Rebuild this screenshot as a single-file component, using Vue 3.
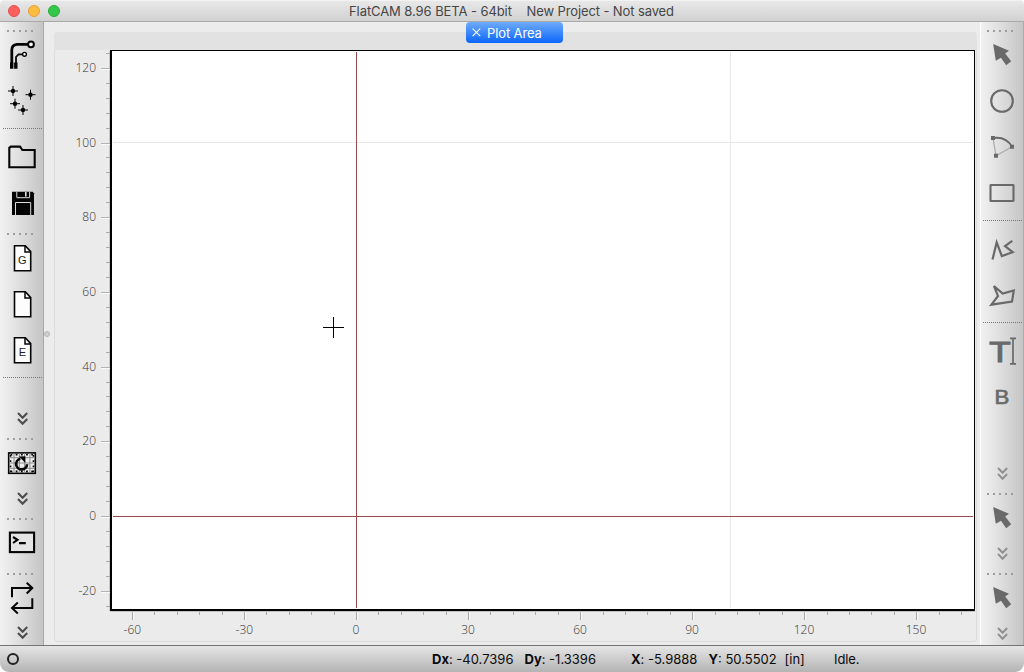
<script setup>
const leftTools = ['handle', 'track', 'pads', 'sep', 'folder', 'save', 'handle', 'gerber', 'file', 'excellon', 'sep', 'more', 'handle', 'replot', 'more', 'handle', 'shell', 'handle', 'swap', 'more']
const rightTools = ['handle', 'select', 'circle', 'arc', 'rect', 'sep', 'path', 'polygon', 'sep', 'text', 'buffer', 'more', 'handle', 'select', 'more', 'handle', 'select', 'more']
const bars = [{ side: 'left', tools: leftTools }, { side: 'right', tools: rightTools }]
const padSpots = [[6, 5], [23.5, 8.7], [8, 17.7], [16, 24]]

const x0 = 356, y0 = 516, unit = 3.735
const yMajor = [120, 100, 80, 60, 40, 20, 0, -20].map(v => ({ v, p: Math.round(y0 - v * unit) }))
const yMinor = []
for (let v = -24; v <= 124; v += 4) if (v % 20) yMinor.push(Math.round(y0 - v * unit))
const xMajor = [-60, -30, 0, 30, 60, 90, 120, 150].map(v => ({ v, p: Math.round(x0 + v * unit) }))
const xMinor = []
for (let v = -60; v <= 162; v += 6) if (v % 30) xMinor.push(Math.round(x0 + v * unit))
</script>

<template>
  <div class="window">
    <header class="titlebar">
      <div class="lights"><i class="red"></i><i class="amber"></i><i class="green"></i></div>
      <span class="app-name">FlatCAM 8.96 BETA - 64bit</span>
      <span class="project">New Project - Not saved</span>
    </header>

    <div class="body">
      <nav v-for="bar in bars" :key="bar.side" class="toolbar" :class="bar.side">
        <template v-for="(t, i) in bar.tools" :key="i">
          <div v-if="t === 'handle'" class="handle"><i v-for="n in 5" :key="n"></i></div>
          <div v-else-if="t === 'sep'" class="sep"></div>
          <svg v-else-if="t === 'more'" class="more" viewBox="0 0 14 14"><path d="M3 1 L7.6 5.8 L12.2 1 M3 7 L7.6 11.8 L12.2 7" /></svg>
          <svg v-else class="icon" viewBox="0 0 30 30">
            <g v-if="t === 'track'">
              <path d="M21 4.3 H10 Q4.8 4.8 4.8 10 V24" stroke-width="2.8" />
              <circle cx="24" cy="4.3" r="2.9" stroke-width="2" fill="#fff" />
              <path d="M15 14.3 H11.5 L9 17 V24" stroke-width="1.8" />
              <circle cx="17.5" cy="14.3" r="1.9" stroke-width="1.4" fill="#fff" />
              <path d="M4.7 22.5 V28.7 M8.8 22.5 V28.7" stroke-width="3.4" />
            </g>
            <g v-else-if="t === 'pads'">
              <g v-for="p in padSpots" :key="p[0]" :transform="`translate(${p[0]} ${p[1]})`">
                <path d="M-5 0 H5 M0 -5 V5" stroke-width="1" />
                <circle r="2.2" class="solid" />
              </g>
            </g>
            <path v-else-if="t === 'folder'" d="M2.3 25.2 V5.8 L3.8 4.6 H13 L15.4 8 H27.7 V25.2 Z" stroke-width="2.1" />
            <g v-else-if="t === 'save'">
              <path class="solid" d="M5 3.7 H25.6 L27 5.2 V27 H5 Z" />
              <path d="M9.8 3.7 V9.2 M22.6 3.7 V9.2 M9.6 9.7 H22.8" stroke="#ddd" stroke-width="1" />
              <rect x="18" y="4" width="1.6" height="4.6" fill="#ddd" stroke="none" />
              <path d="M8.5 27 V14.5 H23.7 V27" stroke="#ddd" stroke-width="1" />
            </g>
            <g v-else-if="['gerber', 'file', 'excellon'].includes(t)">
              <path d="M7.5 2.8 H18.3 L23.7 8.6 V27.7 H7.5 Z" fill="#fdfdfd" stroke-width="1.6" />
              <path d="M18 3 V8.9 H23.5" stroke-width="1.5" />
              <text v-if="t !== 'file'" x="15.4" y="21.4">{{ t === 'gerber' ? 'G' : 'E' }}</text>
            </g>
            <g v-else-if="t === 'replot'">
              <rect x="1.7" y="4.9" width="26.6" height="20.4" fill="#eee" stroke-width="1.6" />
              <path d="M2 9.7 H28 M2 15 H28 M2 20.3 H28 M7 5 V25 M12.3 5 V25 M17.6 5 V25 M22.9 5 V25" stroke="#8a8a8a" stroke-width="1" />
              <path d="M3.5 6.8 H27 M3.5 23.4 H27" stroke-dasharray="1.8 3.4" stroke-width="1.6" />
              <path d="M3.6 7 V24 M26.4 7 V24" stroke-dasharray="1.8 3.4" stroke-width="1.5" />
              <path d="M13.4 10.8 A5.4 5.4 0 1 0 20 16.2" stroke-width="2.7" />
              <path class="solid" d="M12 8.6 L18.4 8.2 V15 Z" />
            </g>
            <g v-else-if="t === 'shell'">
              <rect x="2.9" y="5.6" width="24.2" height="19.5" fill="#e4e4e4" stroke-width="2.1" />
              <path d="M6 10 L10.5 12.9 L6 16" stroke-width="2.1" />
              <path d="M12 16.2 H18.8" stroke-width="2.2" />
            </g>
            <path v-else-if="t === 'swap'" d="M5 14.3 V5 H25 M19.7 -.3 L25.3 5 L19.7 10.5 M25.3 15.3 V25 H5 M10.8 19.5 L5 25 L10.8 30.5" stroke-width="2" />
            <path v-else-if="t === 'select'" class="solid" d="M6.2 4 L22 10.7 L18.2 13.4 L24.2 21.3 L19.2 25.3 L14 17.7 L8.8 20.8 Z" />
            <circle v-else-if="t === 'circle'" cx="15" cy="15" r="10.8" stroke-width="2.1" />
            <g v-else-if="t === 'arc'">
              <path d="M6 6 L9 23.7 L25 14.7" stroke="#aaa" stroke-width="1.2" />
              <path d="M6 6 Q19 4 25 14.7" stroke-width="1.9" />
              <path class="solid" d="M4 4 h4 v4 h-4 z M23 12.7 h4 v4 h-4 z M7 21.7 h4 v4 h-4 z" />
            </g>
            <rect v-else-if="t === 'rect'" x="3.5" y="7" width="23" height="16" stroke-width="2.1" rx=".4" />
            <path v-else-if="t === 'path'" d="M5.5 25.5 L9.7 8.4 L14.8 22 L25.7 18.2 L18 12 L25.3 6.9" stroke-width="2.2" />
            <path v-else-if="t === 'polygon'" d="M7 5.2 L15.7 12.6 L26.8 9.5 L25 20.6 L4.4 23.7 L11 15 Z" stroke-width="2.2" />
            <g v-else-if="t === 'text'">
              <text class="big-t" x="2.3" y="26.3" textLength="21.4" lengthAdjust="spacingAndGlyphs">T</text>
              <path d="M26 2 V28 M23 2.3 H29 M23 27.8 H29" stroke-width="1.7" />
            </g>
            <text v-else-if="t === 'buffer'" class="big-b" x="7.4" y="22.3" textLength="14.8" lengthAdjust="spacingAndGlyphs">B</text>
          </svg>
        </template>
      </nav>

      <div class="splitter"><i></i></div>

      <main class="workspace">
        <section class="panel">
          <div class="panel-head"></div>
          <svg class="plot" width="923" height="591" viewBox="54 50 923 591">
            <g shape-rendering="crispEdges">
              <rect x="110" y="50" width="865" height="561" fill="#000" />
              <rect x="112" y="51" width="862" height="558" fill="#fff" />
              <rect x="109" y="51" width="1" height="560" fill="#c8c8c8" />
              <rect x="110" y="611" width="865" height="1" fill="#c4c4c4" />
              <g v-for="t in yMajor" :key="'y' + t.v">
                <rect x="101" :y="t.p" width="9" height="1" fill="#b4b4b4" />
                <rect x="101" :y="t.p + 1" width="9" height="1" fill="#fafafa" />
              </g>
              <rect v-for="p in yMinor" :key="'m' + p" x="106" :y="p" width="4" height="1" fill="#aaa" />
              <g v-for="t in xMajor" :key="'x' + t.v">
                <rect :x="t.p" y="612" width="1" height="8" fill="#a9a9a9" />
                <rect :x="t.p + 1" y="612" width="1" height="8" fill="#fafafa" />
              </g>
              <rect v-for="p in xMinor" :key="'n' + p" :x="p" y="612" width="1" height="3" fill="#aaa" />
              <rect x="113" y="142" width="860" height="1" fill="#e8e8e8" />
              <rect x="730" y="52" width="1" height="556" fill="#e8e8e8" />
              <rect x="113" y="516" width="860" height="1" fill="#98494c" />
              <rect x="356" y="52" width="1" height="556" fill="#98494c" />
              <rect x="323" y="327" width="21" height="1" fill="#000" />
              <rect x="333" y="317" width="1" height="21" fill="#000" />
            </g>
            <text v-for="t in yMajor" :key="'a' + t.v" x="96" :y="t.p + 4" text-anchor="end">{{ t.v }}</text>
            <text v-for="t in xMajor" :key="'b' + t.v" :x="t.p + (t.v < 0 ? .3 : 0)" y="634" text-anchor="middle">{{ t.v }}</text>
          </svg>
        </section>
        <div class="tab">
          <svg viewBox="0 0 9 9"><path d="M.6 .6 L8.2 8.2 M8.2 .6 L.6 8.2" /></svg>
          <span>Plot Area</span>
        </div>
      </main>
    </div>

    <footer class="status">
      <div class="ring"><i></i></div>
      <span><b>Dx</b>: -40.7396</span>
      <span><b>Dy</b>: -1.3396</span>
      <span><b>X</b>: -5.9888</span>
      <span><b>Y</b>: 50.5502</span>
      <span>[in]</span>
      <span class="state">Idle.</span>
    </footer>
  </div>
</template>

<style>
body { background: #fff; overflow: hidden; }
</style>

<style scoped>
.window { width: 1024px; height: 672px; display: flex; flex-direction: column; overflow: hidden; border-radius: 5px 5px 9px 9px; background: #ececec; font-family: Inter, "Liberation Sans", sans-serif; }
.titlebar { height: 22px; box-sizing: border-box; flex: none; display: grid; grid-template-columns: 349px 177.5px auto; align-items: center; background: linear-gradient(#e8e8e8, #d1d1d1); border-bottom: 1px solid #a9a9a9; border-top: 1px solid #f2f2f2; font-size: 13px; color: #464646; white-space: nowrap; }
.lights { display: flex; gap: 8px; padding-left: 8px; }
.lights i { width: 12px; height: 12px; box-sizing: border-box; border-radius: 50%; }
.red { background: #fc605c; border: 1px solid #e0504c; }
.amber { background: #fdbc40; border: 1px solid #dfa035; }
.green { background: #34c84a; border: 1px solid #28aa35; }
.app-name { letter-spacing: -.08px; }
.project { letter-spacing: -.11px; }
.body { height: 623px; flex: none; display: flex; }
.toolbar { box-sizing: border-box; height: 623px; padding-top: 8px; display: grid; justify-items: start; align-items: start; flex: none; }
.left { order: 1; width: 44px; padding-left: 7px; background: linear-gradient(90deg, #f1f1f1, #e2e2e2 38%, #c5c5c5); border-right: 1px solid #a8a8a8; --ink: #050505; --arrow: #4c4c4c; grid-template-rows: 10px 46px 42px 14px 46px 45px 10px 46px 46px 42px 35px 26px 10px 44px 26px 9px 46px 10px 43px 14px; }
.right { order: 4; width: 44px; padding-left: 6px; background: linear-gradient(90deg, #f1f1f1, #e2e2e2 38%, #c5c5c5); border-left: 1px solid #fff; border-right: 1px solid #aaa; --ink: #696969; --arrow: #929292; grid-template-rows: 10px 46px 46px 46px 42px 14px 47px 41px 14px 46px 85px 26px 10px 44px 26px 10px 44px 14px; }
.icon { display: block; width: 30px; height: 30px; overflow: visible; fill: none; stroke: var(--ink); }
.icon .solid { fill: var(--ink); stroke: none; }
.icon text { fill: #222; stroke: none; font: 11px "Liberation Sans", sans-serif; text-anchor: middle; }
.icon .big-t { fill: var(--ink); stroke: var(--ink); stroke-width: 1.1px; font: 29px "Liberation Sans", sans-serif; text-anchor: start; }
.icon .big-b { fill: var(--ink); stroke: var(--ink); stroke-width: .7px; font: 21px "Liberation Sans", sans-serif; text-anchor: start; }
.more { width: 14px; height: 14px; margin-left: 8px; overflow: visible; fill: none; stroke: var(--arrow); stroke-width: 2px; }
.handle { display: flex; gap: 4px; height: 2px; }
.handle i { width: 2px; height: 2px; background: #9d9d9d; }
.sep { height: 1px; width: 40px; margin-left: -4px; background: repeating-linear-gradient(90deg, #777 0 1px, transparent 1px 2px); }
.splitter { order: 2; width: 10px; flex: none; display: flex; align-items: center; }
.splitter i { width: 6px; height: 6px; box-sizing: border-box; border-radius: 50%; border: 1px solid #b5b5b5; background: #cfcfcf; }
.workspace { order: 3; flex: 1; position: relative; padding: 10px 3px 3px 0; box-sizing: border-box; }
.panel { height: 610px; width: 923px; box-sizing: border-box; background: #ebebeb; border-radius: 4px; overflow: hidden; box-shadow: inset 0 0 0 1px #dcdcdc; }
.panel-head { height: 18px; background: #e2e2e2; }
.plot { display: block; }
.plot text { font: 300 12px "Open Sans", sans-serif; fill: #333; }
.tab { position: absolute; left: 412px; top: 0; width: 97px; height: 21px; box-sizing: border-box; display: flex; align-items: center; gap: 6px; padding-left: 6px; border-radius: 4px; background: linear-gradient(#6eabfa, #0d66fb); color: #fff; font-size: 13px; white-space: nowrap; letter-spacing: -.12px; }
.tab svg { width: 9px; height: 9px; fill: none; stroke: #fff; stroke-width: 1.1px; }
.status { flex: none; height: 27px; box-sizing: border-box; display: grid; grid-template-columns: 432px 92.5px 106.5px 77.5px 76px 49.5px auto; align-items: center; border-top: 1px solid #747474; background: linear-gradient(#e5e5e5, #b4b4b4); font-size: 13px; color: #0b0b0b; white-space: nowrap; }
.state { letter-spacing: -.1px; }
.ring { padding-left: 7px; }
.ring i { display: block; width: 12px; height: 12px; box-sizing: border-box; border: 2px solid #222; border-radius: 50%; }
</style>
